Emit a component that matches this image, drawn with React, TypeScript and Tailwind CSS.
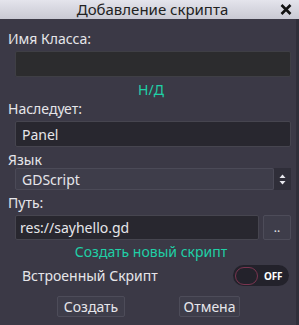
import React from "react";

export default function App() {
  return (
    <div
      className="w-[299px] h-[325px] flex flex-col bg-[#3b3946] text-[#e6e6ea] overflow-hidden"
      style={{ fontFamily: '"Noto Sans", "Open Sans", sans-serif' }}
    >
      {/* Title bar */}
      <div className="relative h-[19px] shrink-0 bg-gradient-to-b from-[#e4e4ec] to-[#c9c9d3] flex items-center justify-center">
        <span className="text-[15px] leading-none text-[#222] pl-[6px]">Добавление скрипта</span>
        <svg className="absolute right-[7px] top-[4px]" width="12" height="11" viewBox="0 0 12 11">
          <path d="M1.5 1L10.5 10M10.5 1L1.5 10" stroke="#111" strokeWidth="2.6" strokeLinecap="butt" />
        </svg>
      </div>

      <div className="flex-1 flex flex-col pl-[8px] pr-[5px] border-r-[3px] border-[#302f3a]">
        <div className="mt-[11px] text-[14px] leading-[17px]">Имя Класса:</div>
        <div className="mt-[4px] ml-[7px] h-[26px] bg-[#2c2c2e] border border-[#3f3f45] rounded-[2px]" />
        <div className="mt-[4px] text-center text-[14px] leading-[17px] text-[#20d0a6] pl-[3px]">Н/Д</div>

        <div className="mt-[2px] text-[14px] leading-[17px]">Наследует:</div>
        <div className="mt-[4px] ml-[7px] h-[26px] bg-[#28272f] border border-[#46454f] rounded-[2px] flex items-center pl-[6px] text-[14px]">
          Panel
        </div>

        <div className="mt-[4px] text-[14px] leading-[17px]">Язык</div>
        <div className="mt-[0px] ml-[7px] h-[22px] flex">
          <div className="flex-1 bg-[#3e3d4a] border border-[#4b4a57] rounded-[2px] flex items-center pl-[6px] text-[14px]">
            GDScript
          </div>
          <div className="w-[17px] bg-[#2f2e39] flex items-center justify-center">
            <svg width="7" height="11" viewBox="0 0 7 11">
              <path d="M3.5 0.5L6.5 4H0.5Z" fill="#e8e8ee" />
              <path d="M3.5 10.5L6.5 7H0.5Z" fill="#e8e8ee" />
            </svg>
          </div>
        </div>

        <div className="mt-[4px] text-[14px] leading-[17px]">Путь:</div>
        <div className="mt-[4px] ml-[7px] h-[25px] flex gap-[4px]">
          <div className="flex-1 bg-[#28272f] border border-[#46454f] rounded-[2px] flex items-center pl-[4px] text-[14px]">
            res://sayhello.gd
          </div>
          <div className="w-[28px] bg-[#3e3d4a] border border-[#4d4c59] rounded-[2px] flex items-end justify-center pb-[5px] text-[12px] leading-none">
            ..
          </div>
        </div>

        <div className="mt-[3px] text-center text-[14px] leading-[17px] text-[#20d0a6] pl-[3px]">Создать новый скрипт</div>

        <div className="mt-[5px] flex items-center pl-[14px] pr-[2px]">
          <span className="flex-1 text-[14px] leading-[17px]">Встроенный Скрипт</span>
          <div className="w-[56px] h-[21px] rounded-full bg-[#23222b] flex items-center pl-[2px] gap-[6px]">
            <div className="w-[23px] h-[18px] rounded-full border-[1.5px] border-[#7a3550]" />
            <span className="text-[10px] font-bold leading-none text-white tracking-tight">OFF</span>
          </div>
        </div>

        <div className="mt-[10px] flex">
          <div className="ml-[49px] w-[68px] h-[21px] bg-[#3e3d4a] border border-[#4d4c59] rounded-[2px] flex items-center justify-center text-[14px]">
            Создать
          </div>
          <div className="ml-[54px] w-[61px] h-[21px] bg-[#3e3d4a] border border-[#4d4c59] rounded-[2px] flex items-center justify-center text-[14px]">
            Отмена
          </div>
        </div>
      </div>
    </div>
  );
}
